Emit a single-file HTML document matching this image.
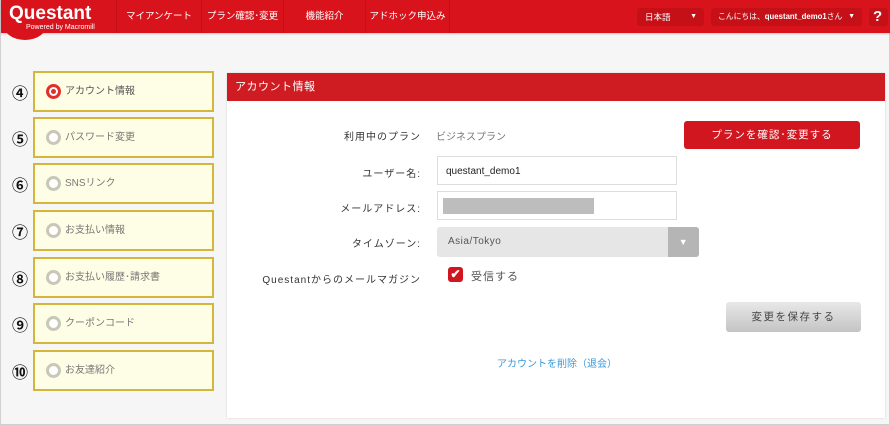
<!DOCTYPE html>
<html><head><meta charset="utf-8"><style>
*{margin:0;padding:0;box-sizing:border-box}
body{width:890px;height:425px;background:#f6f6f6;font-family:"Liberation Sans","Noto Sans CJK JP",sans-serif;position:relative;overflow:hidden;border:1px solid #d0d0d0;border-top:none}
.hdr{position:absolute;left:0;top:0;width:890px;height:33px;background:#d9131c;box-shadow:0 1px 2px rgba(0,0,0,.2)}
.bub{position:absolute;left:2px;top:8px;width:44px;height:32px;border-radius:50%;background:#d9131c}
.lt{position:absolute;left:8px;top:3px;color:#fff;font-weight:bold;font-size:19px}
.ls{position:absolute;left:25px;top:24px;color:#fff;font-size:7px}
.nav{position:absolute;top:0;height:33px;color:#fff;font-size:9.5px;line-height:33px;text-align:center;border-left:1px solid #c40f18;white-space:nowrap}
.dd{position:absolute;top:8px;height:18px;background:#c51018;border-radius:3px;color:#fff;font-size:8.5px;line-height:18px;padding-left:8px;white-space:nowrap}
.num{position:absolute;left:11px;font-size:16px;font-weight:bold;color:#111}
.side{position:absolute;left:32px;width:181px;height:41px;background:#fefee6;border:2px solid #d4b63c;font-size:10px;color:#777;line-height:37px;padding-left:30px}
.side i{position:absolute;left:11px;top:11px;width:15px;height:15px;border-radius:50%;border:3px solid #c8c8b8;background:#fff}
.side.on{color:#555}
.side.on i{border-color:#e0302a;background:#fff}
.side.on i:after{content:"";position:absolute;left:2px;top:2px;width:5px;height:5px;border-radius:50%;background:#e0302a}
.panel{position:absolute;left:226px;top:73px;width:658px;height:345px;background:#fff;box-shadow:0 0 2px rgba(0,0,0,.15)}
.ph{height:28px;background:#cf1c22;color:#fff;font-size:11px;line-height:28px;padding-left:8px;letter-spacing:.5px}
.lab{position:absolute;right:468px;font-size:10px;color:#333;letter-spacing:1px;text-align:right;white-space:nowrap}
.inp{position:absolute;left:436px;width:240px;height:29px;border:1px solid #ddd;background:#fff;font-size:10px;line-height:29px;padding-left:8px;color:#222}
</style></head><body>
<div class="hdr">
 <div class="bub"></div>
 <div class="lt">Questant</div>
 <div class="ls">Powered by Macromill</div>
 <div class="nav" style="left:115px;width:85px">マイアンケート</div>
 <div class="nav" style="left:200px;width:82px">プラン確認･変更</div>
 <div class="nav" style="left:282px;width:82px">機能紹介</div>
 <div class="nav" style="left:364px;width:85px;border-right:1px solid #c40f18">アドホック申込み</div>
 <div class="dd" style="left:636px;width:67px">日本語<span style="position:absolute;right:7px;font-size:7px">▼</span></div>
 <div class="dd" style="left:710px;width:151px;font-size:7.8px;padding-left:7px">こんにちは、<b>questant_demo1</b>さん<span style="position:absolute;right:7px;font-size:7px">▼</span></div>
 <div class="dd" style="left:868px;width:19px;padding-left:4px;font-size:15px;font-weight:bold">?</div>
</div>
<div class="num" style="top:80px">④</div><div class="side on" style="top:71px"><i></i>アカウント情報</div>
<div class="num" style="top:126px">⑤</div><div class="side" style="top:117px"><i></i>パスワード変更</div>
<div class="num" style="top:172px">⑥</div><div class="side" style="top:163px"><i></i>SNSリンク</div>
<div class="num" style="top:219px">⑦</div><div class="side" style="top:210px"><i></i>お支払い情報</div>
<div class="num" style="top:266px">⑧</div><div class="side" style="top:257px"><i></i>お支払い履歴･請求書</div>
<div class="num" style="top:312px">⑨</div><div class="side" style="top:303px"><i></i>クーポンコード</div>
<div class="num" style="top:359px">⑩</div><div class="side" style="top:350px"><i></i>お友達紹介</div>
<div class="panel"><div class="ph">アカウント情報</div></div>
<div class="lab" style="top:128px">利用中のプラン</div>
<div style="position:absolute;left:435px;top:128px;font-size:10px;color:#777">ビジネスプラン</div>
<div style="position:absolute;left:683px;top:121px;width:176px;height:28px;background:#d2161f;border-radius:3px;color:#fff;font-size:10.5px;line-height:28px;text-align:center;letter-spacing:1px">プランを確認･変更する</div>
<div class="lab" style="top:165px">ユーザー名:</div>
<div class="inp" style="top:156px">questant_demo1</div>
<div class="lab" style="top:200px">メールアドレス:</div>
<div class="inp" style="top:191px"><div style="position:absolute;left:5px;top:6px;width:151px;height:16px;background:#bdbdbd"></div></div>
<div class="lab" style="top:235px">タイムゾーン:</div>
<div style="position:absolute;left:436px;top:227px;width:262px;height:30px;background:#e6e6e6;border-radius:3px;font-size:10px;color:#555;line-height:30px;padding-left:11px;letter-spacing:.5px">Asia/Tokyo<div style="position:absolute;right:0;top:0;width:31px;height:30px;background:#b5b5b5;border-radius:0 3px 3px 0;color:#fff;text-align:center;font-size:9px">▼</div></div>
<div class="lab" style="top:271px">Questantからのメールマガジン</div>
<div style="position:absolute;left:447px;top:267px;width:15px;height:15px;background:#d2161f;border-radius:3px;color:#fff;font-size:12px;line-height:15px;text-align:center;font-weight:bold">✔</div>
<div style="position:absolute;left:470px;top:268px;font-size:11px;color:#555;letter-spacing:1px">受信する</div>
<div style="position:absolute;left:725px;top:302px;width:135px;height:30px;background:linear-gradient(#e8e8e8,#c4c4c4);border-radius:3px;font-size:10.5px;line-height:30px;text-align:center;color:#444;letter-spacing:1.5px">変更を保存する</div>
<div style="position:absolute;left:496px;top:355px;font-size:10px;color:#3a9ad9">アカウントを削除（退会）</div>
</body></html>
